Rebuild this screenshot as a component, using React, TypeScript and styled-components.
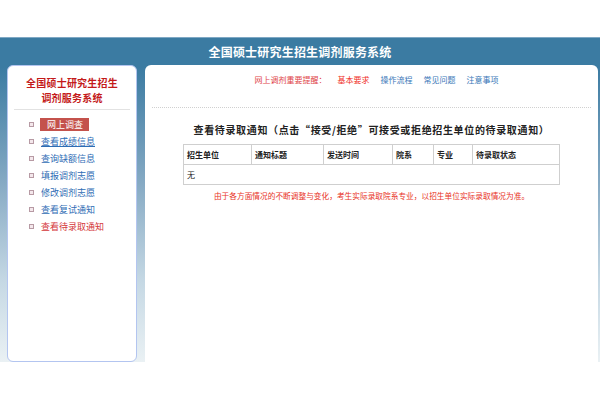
import React from "react";
import styled, { createGlobalStyle } from "styled-components";

const GlobalStyle = createGlobalStyle`
	html, body {
		margin: 0;
		padding: 0;
		background: #fff;
		font-family: "Noto Sans CJK SC", "Noto Sans", sans-serif;
	}
`;

const Page = styled.div`
	width: 600px;
	height: 400px;
	padding-top: 37px;
	box-sizing: border-box;
`;

const Frame = styled.div`
	height: 325px;
	display: flex;
	flex-direction: column;
	background: linear-gradient(to bottom, #3b7ba2 0, #3b7ba2 30px, #86aac4 45%, #c5d8e4 75%, #eaf1f4 100%);
`;

const TopBar = styled.header`
	height: 28px;
	box-sizing: border-box;
	border-top: 1px solid #7fa8c4;
	display: flex;
	align-items: center;
	justify-content: center;
	color: #fff;
	font-size: 12px;
	font-weight: 700;
	letter-spacing: 0.2px;
`;

const Body = styled.div`
	flex: 1;
	display: flex;
	gap: 8px;
	padding: 0 2px 0 7px;
`;

const Sidebar = styled.aside`
	width: 130px;
	box-sizing: border-box;
	background: #fff;
	border: 1px solid #b3c5f0;
	border-radius: 6px;
	display: flex;
	flex-direction: column;
`;

const SideTitle = styled.h2`
	margin: 9px 0 0;
	font-size: 10px;
	line-height: 15px;
	letter-spacing: 0.2px;
	font-weight: 700;
	color: #c41a1a;
	text-align: center;
`;

const SideRule = styled.hr`
	margin: 4px 6px 0;
	border: 0;
	border-top: 1px solid #e2e2e2;
`;

const Menu = styled.ul`
	list-style: none;
	margin: 0;
	padding: 6px 0 0 21px;
`;

const MenuItem = styled.li`
	display: flex;
	align-items: center;
	gap: 7px;
	height: 17px;
	font-size: 9px;
`;

const Bullet = styled.span`
	width: 3px;
	height: 3px;
	border: 1px solid #b79aa4;
	background: #f4e8ec;
`;

const MenuLink = styled.a<{ $tone: "blue" | "red" | "active"; $underline?: boolean }>`
	color: ${(p) => (p.$tone === "red" ? "#d4363a" : p.$tone === "active" ? "#fff" : "#2f6db5")};
	background: ${(p) => (p.$tone === "active" ? "#c4524c" : "transparent")};
	padding: ${(p) => (p.$tone === "active" ? "0 6px 0 7px" : "0")};
	margin-left: ${(p) => (p.$tone === "active" ? "-1px" : "0")};
	line-height: 13px;
	text-decoration: ${(p) => (p.$underline ? "underline" : "none")};
`;

const Main = styled.main`
	flex: 1;
	background: #fff;
	border-radius: 6px 6px 0 0;
	display: flex;
	flex-direction: column;
	align-items: center;
`;

const Notice = styled.nav`
	margin-top: 8px;
	padding-left: 10px;
	display: flex;
	gap: 11px;
	font-size: 8px;
	line-height: 14px;
`;

const NoticeItem = styled.span<{ $color: string }>`
	color: ${(p) => p.$color};
`;

const DottedRule = styled.div`
	align-self: stretch;
	margin: 20px 7px 0;
	border-top: 1px dotted #d0d0d0;
`;

const Heading = styled.h3`
	margin: 14px 0 0;
	font-size: 10px;
	line-height: 16px;
	letter-spacing: 0.65px;
	font-weight: 700;
	color: #222;
`;

const Table = styled.table`
	margin-top: 6px;
	width: 376px;
	border-collapse: collapse;
	font-size: 8px;
	color: #222;
	table-layout: fixed;

	th, td {
		border: 1px solid #cfcfcf;
		height: 19px;
		padding: 0 3px;
		text-align: left;
	}

	th {
		font-weight: 700;
	}
`;

const Note = styled.p`
	margin: 5px 0 0;
	font-size: 7.7px;
	line-height: 12px;
	color: #e8321e;
`;

const menu = [
	{ label: "网上调查", tone: "active" as const },
	{ label: "查看成绩信息", tone: "blue" as const, underline: true },
	{ label: "查询缺额信息", tone: "blue" as const },
	{ label: "填报调剂志愿", tone: "blue" as const },
	{ label: "修改调剂志愿", tone: "blue" as const },
	{ label: "查看复试通知", tone: "blue" as const },
	{ label: "查看待录取通知", tone: "red" as const },
];

const columns = [
	{ title: "招生单位", width: 68 },
	{ title: "通知标题", width: 72 },
	{ title: "发送时间", width: 69 },
	{ title: "院系", width: 41 },
	{ title: "专业", width: 39 },
	{ title: "待录取状态", width: 87 },
];

const App: React.FC = () => {
	return (
		<Page>
			<GlobalStyle />
			<Frame>
				<TopBar>全国硕士研究生招生调剂服务系统</TopBar>
				<Body>
					<Sidebar>
						<SideTitle>
							全国硕士研究生招生
							<br />
							调剂服务系统
						</SideTitle>
						<SideRule />
						<Menu>
							{menu.map((m) => (
								<MenuItem key={m.label}>
									<Bullet />
									<MenuLink href="#" $tone={m.tone} $underline={m.underline}>
										{m.label}
									</MenuLink>
								</MenuItem>
							))}
						</Menu>
					</Sidebar>
					<Main>
						<Notice>
							<NoticeItem $color="#e04448">网上调剂重要提醒：</NoticeItem>
							<NoticeItem $color="#f0301e">基本要求</NoticeItem>
							<NoticeItem $color="#3a78b8">操作流程</NoticeItem>
							<NoticeItem $color="#3a78b8">常见问题</NoticeItem>
							<NoticeItem $color="#3a78b8">注意事项</NoticeItem>
						</Notice>
						<DottedRule />
						<Heading>查看待录取通知（点击“接受/拒绝”可接受或拒绝招生单位的待录取通知）</Heading>
						<Table>
							<colgroup>
								{columns.map((c) => (
									<col key={c.title} style={{ width: c.width }} />
								))}
							</colgroup>
							<thead>
								<tr>
									{columns.map((c) => (
										<th key={c.title}>{c.title}</th>
									))}
								</tr>
							</thead>
							<tbody>
								<tr>
									<td colSpan={6}>无</td>
								</tr>
							</tbody>
						</Table>
						<Note>由于各方面情况的不断调整与变化，考生实际录取院系专业，以招生单位实际录取情况为准。</Note>
					</Main>
				</Body>
			</Frame>
		</Page>
	);
};

export default App;
